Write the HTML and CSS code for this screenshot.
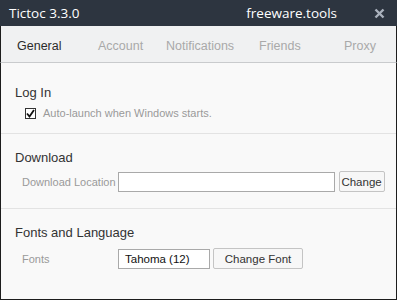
FILE: index.html
```html
<!DOCTYPE html>
<html lang="en">
<head>
    <meta charset="UTF-8">
    <meta name="viewport" content="width=device-width, initial-scale=1.0">
    <title>Tictoc 3.3.0</title>
    <link rel="stylesheet" href="styles.css">
</head>
<body>
    <div class="window">
        <div class="titlebar">
            <span class="app-name">Tictoc 3.3.0</span>
            <span class="site">freeware.tools</span>
            <svg class="close" width="11" height="11" viewBox="0 0 11 11">
                <path d="M1.5 1.5 L9.5 9.5 M9.5 1.5 L1.5 9.5" stroke="#aab2bd" stroke-width="2.4"/>
            </svg>
        </div>

        <div class="tabs">
            <span class="tab active">General</span>
            <span class="tab w-account">Account</span>
            <span class="tab w-notif">Notifications</span>
            <span class="tab w-friends">Friends</span>
            <span class="tab">Proxy</span>
        </div>

        <div class="content">
            <div class="section first">
                <h3>Log In</h3>
                <label class="check">
                    <span class="box">
                        <svg width="9" height="9" viewBox="0 0 9 9"><path d="M1 4.5 L3.5 7.5 L8 1" fill="none" stroke="#111" stroke-width="1.8"/></svg>
                    </span>
                    Auto-launch when Windows starts.
                </label>
            </div>

            <div class="section">
                <h3>Download</h3>
                <div class="row">
                    <span class="label">Download Location</span>
                    <span class="field wide"></span>
                    <span class="btn">Change</span>
                </div>
            </div>

            <div class="section last">
                <h3>Fonts and Language</h3>
                <div class="row">
                    <span class="label fixed">Fonts</span>
                    <span class="field font">Tahoma (12)</span>
                    <span class="btn big">Change Font</span>
                </div>
            </div>
        </div>
    </div>
</body>
</html>
```

FILE: styles.css
```css
body {
    margin: 0;
    font-family: "Liberation Sans", Arial, sans-serif;
    background-color: #fff;
}
.window {
    width: 397px;
    height: 300px;
    box-sizing: border-box;
    display: flex;
    flex-direction: column;
    background-color: #f9f9f9;
}
.titlebar {
    height: 26px;
    background-color: #2d3540;
    display: flex;
    align-items: center;
    padding: 0 12px 0 9px;
    font-family: "Open Sans", sans-serif;
    font-size: 13.5px;
    color: #fff;
}
.app-name {
    flex: 1;
}
.site {
    margin-right: 37px;
}
.close {
    display: block;
}
.tabs {
    height: 36px;
    background-color: #f0f1f2;
    border-bottom: 1px solid #c9cbcd;
    border-left: 1px solid #1d1d1d;
    border-right: 1px solid #1d1d1d;
    display: flex;
    align-items: center;
    padding: 3px 0 0 16px;
    box-sizing: border-box;
    height: 37px;
    font-size: 12.5px;
    color: #a9a9a9;
}
.tab {
    white-space: nowrap;
}
.tab.active {
    color: #2b2b2b;
    width: 81px;
}
.tab.w-account { width: 68px; }
.tab.w-notif { width: 93px; }
.tab.w-friends { width: 85px; }
.content {
    flex: 1;
    border: 1px solid #1d1d1d;
    border-top: none;
}
.section {
    padding: 16px 14px 16px;
    border-bottom: 1px solid #e3e3e3;
}
.section.first {
    padding-top: 22px;
    padding-bottom: 14px;
}
.section.last {
    border-bottom: none;
}
.section.last h3 {
    margin-bottom: 8px;
}
h3 {
    margin: 0 0 6px;
    font-size: 13px;
    line-height: 15px;
    font-weight: normal;
    color: #333;
}
.section.first h3 {
    margin-bottom: 7px;
}
.check {
    display: flex;
    align-items: center;
    height: 12px;
    margin-left: 10px;
    font-size: 11px;
    color: #9a9a9a;
}
.box {
    width: 11px;
    height: 11px;
    box-sizing: border-box;
    border: 1px solid #333;
    background-color: #fff;
    display: flex;
    align-items: center;
    justify-content: center;
    margin-right: 7px;
}
.row {
    display: flex;
    align-items: center;
    height: 21px;
    margin-left: 7px;
    font-size: 11px;
}
.label {
    color: #9a9a9a;
    white-space: nowrap;
    flex-shrink: 0;
    margin-right: 2px;
}
.label.fixed {
    width: 96px;
    margin-right: 0;
}
.field {
    height: 20px;
    box-sizing: border-box;
    border: 1px solid #a9a9a9;
    background-color: #fff;
    color: #111;
    font-size: 11.5px;
    display: flex;
    align-items: center;
    padding-left: 6px;
    flex-shrink: 0;
}
.field.wide {
    width: 217px;
}
.field.font {
    width: 92px;
}
.btn {
    height: 21px;
    box-sizing: border-box;
    border: 1px solid #c4c4c4;
    border-radius: 2px;
    background-color: #f7f7f7;
    color: #333;
    font-size: 11.5px;
    display: flex;
    align-items: center;
    justify-content: center;
    width: 46px;
    margin-left: 4px;
    flex-shrink: 0;
}
.btn.big {
    width: 90px;
    margin-left: 3px;
}
```
